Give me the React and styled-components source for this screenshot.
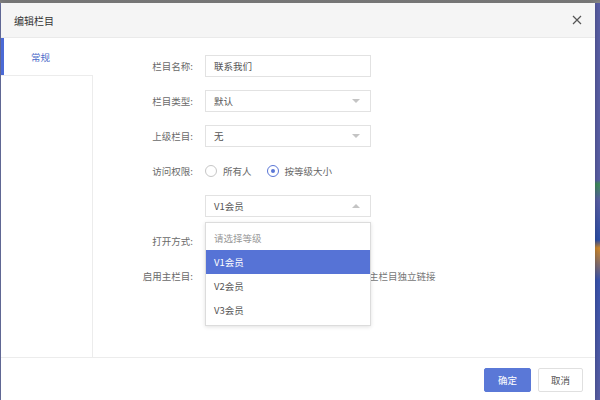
import React from 'react';
import styled, { createGlobalStyle } from 'styled-components';

const GlobalStyle = createGlobalStyle`
    html, body {
        margin: 0;
        padding: 0;
        height: 400px;
        overflow: hidden;
    }
    body {
        font-family: "Noto Sans CJK SC", "Noto Sans", sans-serif;
        background: #5e63a8;
    }
    * {
        box-sizing: border-box;
    }
`;

const Backdrop = styled.div`
    width: 600px;
    height: 400px;
    padding: 3px 0 0 1px;
    background: linear-gradient(to bottom, #7b7b7b 0, #8a8a8a 3px, transparent 3px),
        linear-gradient(to right, #6f77aa 0 1px, transparent 1px),
        linear-gradient(to bottom, #5a5fa6 0 45%, #3f8f5a 46%, #5a5fa6 50%, #2c4fa8 60%, #d18a2c 62%, #3b55b0 70%, #5a5fa6 100%);
`;

const Dialog = styled.div`
    width: 594px;
    height: 399px;
    background: #fff;
    display: flex;
    flex-direction: column;
    box-shadow: 0 0 6px rgba(0, 0, 0, 0.3);
`;

const Header = styled.div`
    height: 35px;
    flex: none;
    display: flex;
    align-items: center;
    justify-content: space-between;
    padding: 0 12px 0 13px;
    background: #f5f5f5;
    border-bottom: 1px solid #eaeaea;
    .title {
        font-size: 10px;
        color: #333;
    }
`;

const CloseButton = styled.button`
    border: none;
    background: none;
    padding: 0;
    width: 12px;
    height: 12px;
    display: flex;
    align-items: center;
    justify-content: center;
    cursor: pointer;
`;

const Body = styled.div`
    flex: 1;
    display: flex;
    min-height: 0;
`;

const Sidebar = styled.div`
    width: 92px;
    flex: none;
    display: flex;
    flex-direction: column;
    .rest {
        flex: 1;
        border-top: 1px solid #ececec;
        border-right: 1px solid #ececec;
    }
`;

const Tab = styled.div`
    height: 37px;
    padding: 12px 0 0 27px;
    font-size: 9.5px;
    color: ${(p) => (p.active ? '#4d6cc9' : '#666')};
    border-left: 3px solid ${(p) => (p.active ? '#4b6ad6' : 'transparent')};
`;

const Form = styled.div`
    flex: 1;
    padding-top: 17px;
    display: grid;
    grid-template-columns: 100px 166px;
    grid-auto-rows: 22px;
    row-gap: 13px;
    column-gap: 12px;
    align-content: start;
`;

const Label = styled.div`
    font-size: 9.5px;
    color: #6a6a6a;
    text-align: right;
    line-height: 22px;
    grid-column: 1;
`;

const Field = styled.div`
    grid-column: 2;
    position: relative;
    display: flex;
    align-items: center;
`;

const Input = styled.div`
    width: 166px;
    height: 22px;
    border: 1px solid #e2e2e2;
    padding: 0 8px;
    display: flex;
    align-items: center;
    justify-content: space-between;
    font-size: 9.5px;
    color: #555;
    background: #fff;
`;

const Arrow = styled.span`
    width: 0;
    height: 0;
    border-left: 4px solid transparent;
    border-right: 4px solid transparent;
    ${(p) => (p.up ? 'border-bottom: 4px solid #c4c4c4;' : 'border-top: 4px solid #c4c4c4;')}
    margin-right: 2px;
`;

const RadioItem = styled.label`
    display: flex;
    align-items: center;
    font-size: 9.5px;
    color: #666;
    margin-right: 15px;
    white-space: nowrap;
`;

const RadioDot = styled.span`
    width: 12px;
    height: 12px;
    border-radius: 50%;
    border: 1px solid ${(p) => (p.checked ? '#5a76d6' : '#c6c6c6')};
    margin-right: 6px;
    display: flex;
    align-items: center;
    justify-content: center;
    &::after {
        content: '';
        width: 4px;
        height: 4px;
        border-radius: 50%;
        background: ${(p) => (p.checked ? '#5a76d6' : 'transparent')};
    }
`;

const Hint = styled.span`
    font-size: 9.5px;
    color: #777;
    white-space: nowrap;
    margin-left: ${(p) => p.offset || 0}px;
`;

const Menu = styled.ul`
    position: absolute;
    top: 27px;
    left: 0;
    width: 166px;
    margin: 0;
    padding: 3px 0;
    list-style: none;
    background: #fff;
    border: 1px solid #dcdcdc;
    box-shadow: 0 1px 4px rgba(0, 0, 0, 0.12);
    z-index: 10;
`;

const MenuItem = styled.li`
    height: 24px;
    line-height: 24px;
    padding-left: 8px;
    font-size: 9.5px;
    color: ${(p) => (p.selected ? '#fff' : p.placeholder ? '#999' : '#555')};
    background: ${(p) => (p.selected ? '#5673d6' : 'transparent')};
`;

const Footer = styled.div`
    height: 45px;
    flex: none;
    border-top: 1px solid #ececec;
    display: flex;
    justify-content: flex-end;
    align-items: flex-start;
    gap: 7px;
    padding: 10px 12px 0 0;
`;

const Button = styled.button`
    height: 24px;
    width: ${(p) => (p.primary ? 47 : 45)}px;
    padding: 0;
    font-family: inherit;
    font-size: 9.5px;
    border: 1px solid ${(p) => (p.primary ? '#5a78d7' : '#e0e0e0')};
    background: ${(p) => (p.primary ? '#5a78d7' : '#fff')};
    color: ${(p) => (p.primary ? '#fff' : '#555')};
    border-radius: 2px;
`;

const levels = ['V1会员', 'V2会员', 'V3会员'];

export default function App() {
    return (
        <>
            <GlobalStyle />
            <Backdrop>
                <Dialog>
                    <Header>
                        <span className="title">编辑栏目</span>
                        <CloseButton aria-label="close">
                            <svg width="10" height="10" viewBox="0 0 10 10">
                                <path d="M1 1 L9 9 M9 1 L1 9" stroke="#555" strokeWidth="1.2" />
                            </svg>
                        </CloseButton>
                    </Header>
                    <Body>
                        <Sidebar>
                            <Tab active>常规</Tab>
                            <div className="rest" />
                        </Sidebar>
                        <Form>
                            <Label>栏目名称:</Label>
                            <Field>
                                <Input>联系我们</Input>
                            </Field>

                            <Label>栏目类型:</Label>
                            <Field>
                                <Input>
                                    默认
                                    <Arrow />
                                </Input>
                            </Field>

                            <Label>上级栏目:</Label>
                            <Field>
                                <Input>
                                    无
                                    <Arrow />
                                </Input>
                            </Field>

                            <Label>访问权限:</Label>
                            <Field>
                                <RadioItem>
                                    <RadioDot />
                                    所有人
                                </RadioItem>
                                <RadioItem>
                                    <RadioDot checked />
                                    按等级大小
                                </RadioItem>
                            </Field>

                            <Label />
                            <Field>
                                <Input>
                                    V1会员
                                    <Arrow up />
                                </Input>
                                <Menu>
                                    <MenuItem placeholder>请选择等级</MenuItem>
                                    {levels.map((lv) => (
                                        <MenuItem key={lv} selected={lv === 'V1会员'}>
                                            {lv}
                                        </MenuItem>
                                    ))}
                                </Menu>
                            </Field>

                            <Label>打开方式:</Label>
                            <Field />

                            <Label>启用主栏目:</Label>
                            <Field>
                                <Hint offset={145}>启用主栏目独立链接</Hint>
                            </Field>
                        </Form>
                    </Body>
                    <Footer>
                        <Button primary>确定</Button>
                        <Button>取消</Button>
                    </Footer>
                </Dialog>
            </Backdrop>
        </>
    );
}
